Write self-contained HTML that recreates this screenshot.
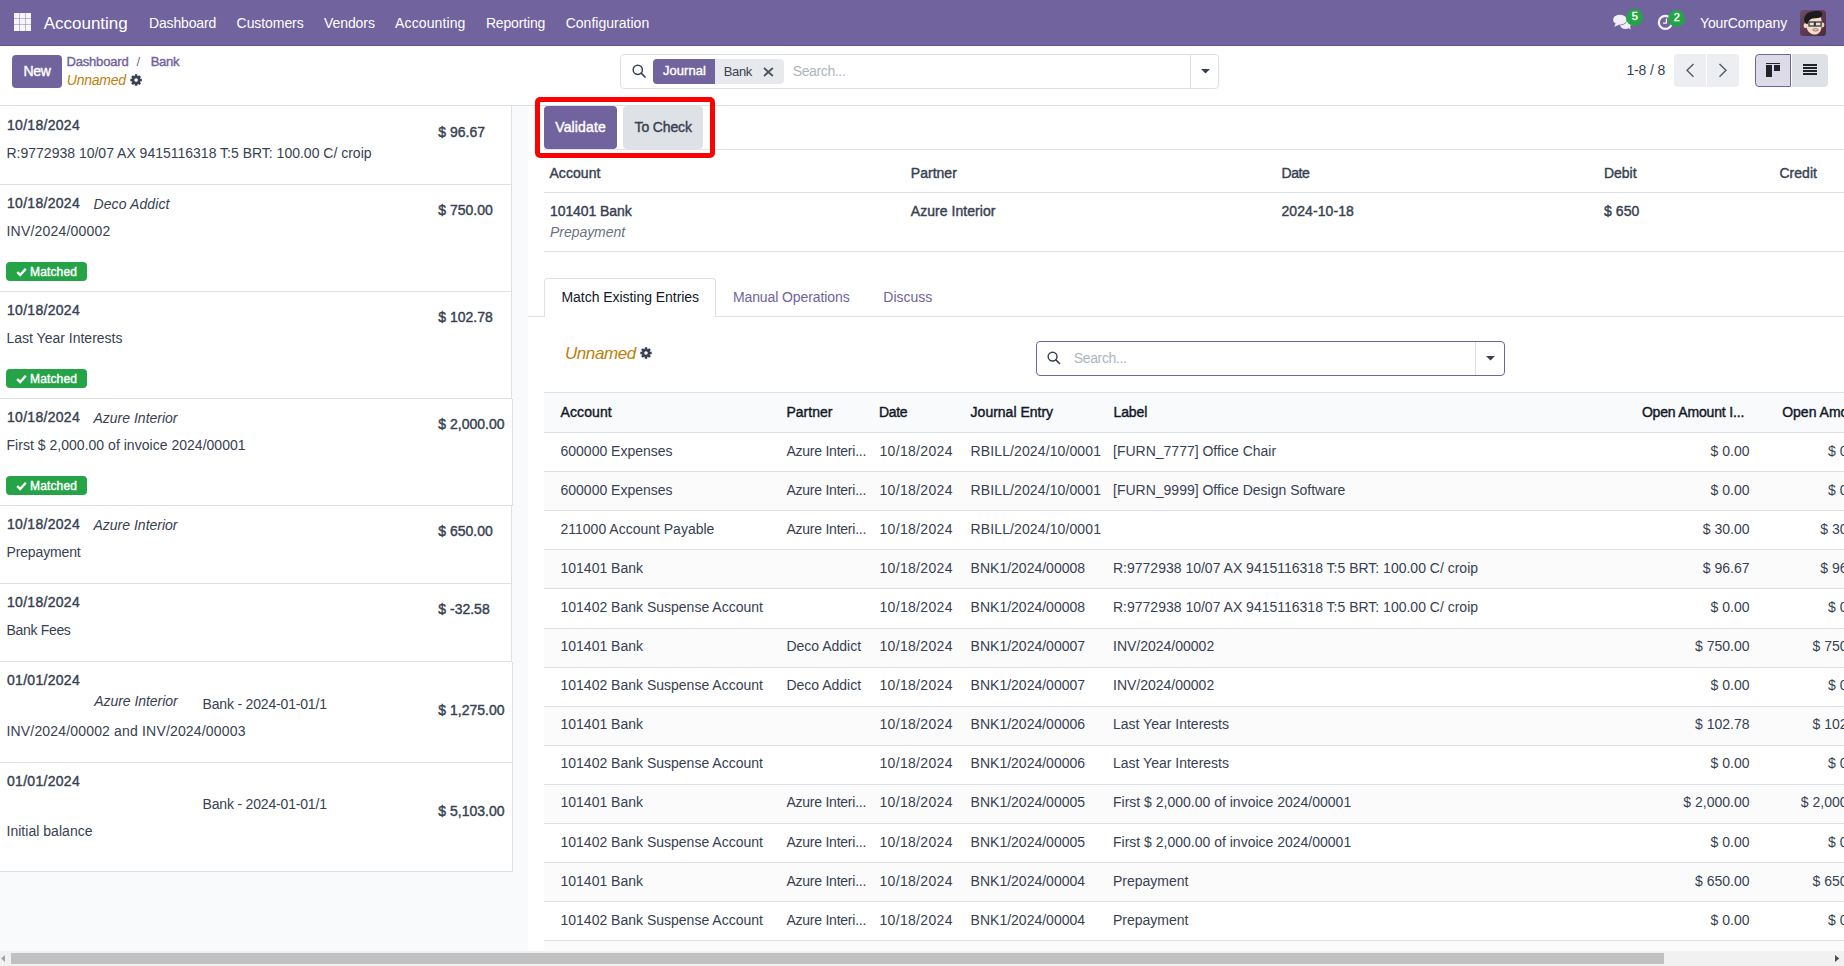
<!DOCTYPE html>
<html><head><meta charset="utf-8"><title>Bank Reconciliation</title>
<style>
html,body{margin:0;padding:0;}
body{width:1844px;height:966px;overflow:hidden;position:relative;background:#fff;font-family:"Liberation Sans",sans-serif;color:#374151;}
body>div,body>svg{position:absolute;}
.t{white-space:nowrap;line-height:1;}
</style></head><body>
<div style="left:0px;top:0px;width:1844px;height:45px;background:#71639e;"></div>
<div style="left:0px;top:45px;width:1844px;height:1px;background:#5f5389;"></div>
<div style="left:14px;top:13px;width:17px;height:18px;background:#f6f5fa;"></div>
<div style="left:19px;top:13px;width:1px;height:18px;background:rgba(113,99,158,0.42);"></div>
<div style="left:25px;top:13px;width:1px;height:18px;background:rgba(113,99,158,0.42);"></div>
<div style="left:14px;top:18px;width:17px;height:1px;background:rgba(113,99,158,0.42);"></div>
<div style="left:14px;top:24px;width:17px;height:1px;background:rgba(113,99,158,0.42);"></div>
<div class="t" style="top:15px;font-size:17px;color:#fff;letter-spacing:-0.011px;left:43.7px;">Accounting</div>
<div class="t" style="top:16px;font-size:14px;color:#fff;letter-spacing:-0.161px;left:149px;">Dashboard</div>
<div class="t" style="top:16px;font-size:14px;color:#fff;letter-spacing:-0.073px;left:236.6px;">Customers</div>
<div class="t" style="top:16px;font-size:14px;color:#fff;letter-spacing:-0.080px;left:324px;">Vendors</div>
<div class="t" style="top:16px;font-size:14px;color:#fff;letter-spacing:0.105px;left:395.1px;">Accounting</div>
<div class="t" style="top:16px;font-size:14px;color:#fff;letter-spacing:-0.152px;left:485.9px;">Reporting</div>
<div class="t" style="top:16px;font-size:14px;color:#fff;letter-spacing:0.020px;left:565.7px;">Configuration</div>
<svg style="position:absolute;left:1608px;top:6px" width="26" height="26" viewBox="0 0 26 26">
<ellipse cx="17.4" cy="18.6" rx="5.4" ry="4.4" fill="#efedf5"/>
<path d="M19.5 21.6 L22.8 23.4 L21.8 19.8z" fill="#efedf5"/>
<ellipse cx="11.9" cy="13.8" rx="7.3" ry="5.5" fill="#71639e"/>
<ellipse cx="11.9" cy="13.8" rx="6.8" ry="5.0" fill="#f1eff7"/>
<path d="M7.6 17.4 L6.3 20.7 L11.8 18.6z" fill="#f1eff7"/>
</svg>
<div style="left:1625.5px;top:8.8px;width:17.6px;height:17.6px;border-radius:50%;background:#24a447;"></div>
<div class="t" style="top:11px;font-size:11px;color:#fff;-webkit-text-stroke:0.4px #fff;left:1634.8px;transform:translateX(-50%);">5</div>
<svg style="position:absolute;left:1655px;top:12px" width="22" height="22" viewBox="0 0 22 22">
<circle cx="10.4" cy="10.4" r="6.55" fill="none" stroke="#f4f2f8" stroke-width="2.3"/>
<path d="M11.4 6.4 V11.2 H8" fill="none" stroke="#f4f2f8" stroke-width="1.3"/>
</svg>
<div style="left:1667.9px;top:9.7px;width:17.6px;height:17.6px;border-radius:50%;background:#24a447;"></div>
<div class="t" style="top:12px;font-size:11px;color:#fff;-webkit-text-stroke:0.4px #fff;left:1676.8px;transform:translateX(-50%);">2</div>
<div class="t" style="top:16px;font-size:14px;color:#fff;letter-spacing:-0.107px;left:1700px;">YourCompany</div>
<svg style="position:absolute;left:1800px;top:10px" width="26" height="26" viewBox="0 0 26 26">
<defs><linearGradient id="ag" x1="0" y1="0" x2="1" y2="1"><stop offset="0" stop-color="#6e4d66"/><stop offset="1" stop-color="#4a2a3f"/></linearGradient></defs>
<rect x="0" y="0" width="26" height="26" rx="3.5" fill="url(#ag)"/>
<ellipse cx="5.6" cy="15.6" rx="2" ry="2.6" fill="#f5d6bf"/>
<ellipse cx="22.6" cy="15" rx="1.8" ry="2.4" fill="#f0cdb3"/>
<path d="M6.5 10 C6.5 6 9 5 14 5 C19 5 21.5 6.5 21.5 11 L21.5 16 C21.5 21.5 18.5 24.6 14.8 24.6 C10.5 24.6 7 21.5 6.5 16z" fill="#f7dcc6"/>
<path d="M4.2 10.5 C3.8 5 8 1.2 14 1.2 C18 1 22 1 22.3 3.5 C22.6 6.5 20 8.2 16 8.2 C12.5 8.2 9.5 8.6 8.3 12.8 L7.2 14.2 C5.6 13.6 4.4 12.4 4.2 10.5z" fill="#1c1c1f"/>
<rect x="9" y="12" width="5.4" height="4" fill="#e8e2de" stroke="#3a3a3a" stroke-width="1.3"/>
<rect x="15.3" y="12" width="5.8" height="4" fill="#e8e2de" stroke="#3a3a3a" stroke-width="1.3"/>
<ellipse cx="15.6" cy="19.8" rx="2.8" ry="1.1" fill="#eee" stroke="#7a4a45" stroke-width="0.8"/>
</svg>
<div style="left:0px;top:105px;width:1844px;height:1px;background:#dde1e6;"></div>
<div style="left:12px;top:55px;width:50px;height:33px;background:#71639e;border-radius:4px;"></div>
<div class="t" style="top:63.599999999999994px;font-size:14px;color:#fff;-webkit-text-stroke:0.4px #fff;letter-spacing:-0.333px;left:23.6px;">New</div>
<div class="t" style="top:54.8px;font-size:13px;color:#71639e;-webkit-text-stroke:0.4px #71639e;letter-spacing:-0.181px;left:66.5px;">Dashboard</div>
<div class="t" style="top:54.8px;font-size:13px;color:#6b7280;left:136.5px;">/</div>
<div class="t" style="top:54.8px;font-size:13px;color:#71639e;-webkit-text-stroke:0.4px #71639e;letter-spacing:-0.285px;left:150.7px;">Bank</div>
<div class="t" style="top:72.8px;font-size:14px;color:#bd800b;font-style:italic;letter-spacing:-0.239px;left:66.8px;">Unnamed</div>
<svg style="position:absolute;left:129.5px;top:74px" width="12.2" height="12.2" viewBox="0 0 24 24"><path fill="#374151" fill-rule="evenodd" d="M9.27 4.06 L9.59 0.65 L14.41 0.65 L14.73 4.06 L15.68 4.45 L18.32 2.27 L21.73 5.68 L19.55 8.32 L19.94 9.27 L23.35 9.59 L23.35 14.41 L19.94 14.73 L19.55 15.68 L21.73 18.32 L18.32 21.73 L15.68 19.55 L14.73 19.94 L14.41 23.35 L9.59 23.35 L9.27 19.94 L8.32 19.55 L5.68 21.73 L2.27 18.32 L4.45 15.68 L4.06 14.73 L0.65 14.41 L0.65 9.59 L4.06 9.27 L4.45 8.32 L2.27 5.68 L5.68 2.27 L8.32 4.45Z M15.6 12 A3.6 3.6 0 1 0 8.4 12 A3.6 3.6 0 1 0 15.6 12Z"/></svg>
<div style="left:620px;top:54px;width:599px;height:35px;border:1px solid #dde1e6;border-radius:4px;box-sizing:border-box;background:#fff;"></div>
<div style="left:1190px;top:55px;width:1px;height:33px;background:#dde1e6;"></div>
<svg style="position:absolute;left:631.5px;top:64px" width="14" height="14" viewBox="0 0 14 14"><circle cx="5.8" cy="5.8" r="4.6" fill="none" stroke="#374151" stroke-width="1.5"/><path d="M9.2 9.2 L13 13" stroke="#374151" stroke-width="1.7" stroke-linecap="round"/></svg>
<div style="left:653px;top:59px;width:62px;height:25px;background:#71639e;border-radius:4px 0 0 4px;"></div>
<div class="t" style="top:64px;font-size:13px;color:#fff;-webkit-text-stroke:0.4px #fff;letter-spacing:0.049px;left:663px;">Journal</div>
<div style="left:715px;top:59px;width:69px;height:25px;background:#e7e9ed;border-radius:0 4px 4px 0;"></div>
<div class="t" style="top:64.6px;font-size:13px;color:#374151;letter-spacing:-0.410px;left:723.8px;">Bank</div>
<svg style="position:absolute;left:762.8px;top:66.8px" width="10.8" height="10" viewBox="0 0 10.8 10"><path d="M1 1 L9.8 9 M9.8 1 L1 9" stroke="#4b5563" stroke-width="1.8"/></svg>
<div class="t" style="top:63.7px;font-size:14px;color:#adb5bd;letter-spacing:-0.368px;left:792.7px;">Search...</div>
<svg style="position:absolute;left:1200.5px;top:69px" width="9" height="5" viewBox="0 0 9 5"><path d="M0 0 H9 L4.5 4.6z" fill="#374151"/></svg>
<div class="t" style="top:62.599999999999994px;font-size:14px;color:#374151;letter-spacing:-0.167px;left:1626.5px;">1-8 / 8</div>
<div style="left:1674px;top:54px;width:32px;height:33px;background:#eceef1;border-radius:4px 0 0 4px;"></div>
<div style="left:1707px;top:54px;width:32px;height:33px;background:#eceef1;border-radius:0 4px 4px 0;"></div>
<svg style="position:absolute;left:1684px;top:62px" width="12" height="17" viewBox="0 0 12 17"><path d="M9.5 2 L3 8.3 L9.5 14.8" fill="none" stroke="#555b63" stroke-width="1.4"/></svg>
<svg style="position:absolute;left:1717px;top:62px" width="12" height="17" viewBox="0 0 12 17"><path d="M2.5 2 L9 8.3 L2.5 14.8" fill="none" stroke="#555b63" stroke-width="1.4"/></svg>
<div style="left:1755px;top:54px;width:36px;height:33px;background:#dedbe9;border:1px solid #71639e;border-radius:4px 0 0 4px;box-sizing:border-box;"></div>
<div style="left:1792px;top:54px;width:36px;height:33px;background:#dee2e6;border-radius:0 4px 4px 0;"></div>
<div style="left:1766px;top:63px;width:14px;height:1px;background:#212529;"></div>
<div style="left:1766px;top:65px;width:6px;height:12px;background:#212529;"></div>
<div style="left:1774px;top:65px;width:6px;height:6px;background:#212529;"></div>
<div style="left:1803px;top:64px;width:14.4px;height:2px;background:#212529;"></div>
<div style="left:1803px;top:67px;width:14.4px;height:2px;background:#212529;"></div>
<div style="left:1803px;top:70px;width:14.4px;height:2px;background:#212529;"></div>
<div style="left:1803px;top:73px;width:14.4px;height:2px;background:#212529;"></div>
<div style="left:0px;top:106px;width:528px;height:845px;background:#f9fafb;"></div>
<div style="left:0px;top:106px;width:511px;height:78px;background:#fff;"></div>
<div style="left:511px;top:106px;width:1px;height:79px;background:#dde1e6;"></div>
<div style="left:0px;top:184px;width:512px;height:1px;background:#dde1e6;"></div>
<div style="left:0px;top:185px;width:511px;height:106px;background:#fff;"></div>
<div style="left:511px;top:185px;width:1px;height:107px;background:#dde1e6;"></div>
<div style="left:0px;top:291px;width:512px;height:1px;background:#dde1e6;"></div>
<div style="left:0px;top:292px;width:511px;height:106px;background:#fff;"></div>
<div style="left:511px;top:292px;width:1px;height:107px;background:#dde1e6;"></div>
<div style="left:0px;top:398px;width:512px;height:1px;background:#dde1e6;"></div>
<div style="left:0px;top:399px;width:512px;height:106px;background:#fff;"></div>
<div style="left:512px;top:399px;width:1px;height:107px;background:#dde1e6;"></div>
<div style="left:0px;top:505px;width:513px;height:1px;background:#dde1e6;"></div>
<div style="left:0px;top:506px;width:511px;height:77px;background:#fff;"></div>
<div style="left:511px;top:506px;width:1px;height:78px;background:#dde1e6;"></div>
<div style="left:0px;top:583px;width:512px;height:1px;background:#dde1e6;"></div>
<div style="left:0px;top:584px;width:511px;height:77px;background:#fff;"></div>
<div style="left:511px;top:584px;width:1px;height:78px;background:#dde1e6;"></div>
<div style="left:0px;top:661px;width:512px;height:1px;background:#dde1e6;"></div>
<div style="left:0px;top:662px;width:512px;height:100px;background:#fff;"></div>
<div style="left:512px;top:662px;width:1px;height:101px;background:#dde1e6;"></div>
<div style="left:0px;top:762px;width:513px;height:1px;background:#dde1e6;"></div>
<div style="left:0px;top:763px;width:512px;height:108px;background:#fff;"></div>
<div style="left:512px;top:763px;width:1px;height:109px;background:#dde1e6;"></div>
<div style="left:0px;top:871px;width:513px;height:1px;background:#dde1e6;"></div>
<div class="t" style="top:118px;font-size:14px;color:#374151;-webkit-text-stroke:0.4px #374151;letter-spacing:0.297px;left:7px;">10/18/2024</div>
<div class="t" style="top:146px;font-size:14px;color:#374151;left:6.5px;">R:9772938 10/07 AX 9415116318 T:5 BRT: 100.00 C/ croip</div>
<div class="t" style="top:125px;font-size:14px;color:#374151;-webkit-text-stroke:0.4px #374151;left:438.3px;">$ 96.67</div>
<div class="t" style="top:196px;font-size:14px;color:#374151;-webkit-text-stroke:0.4px #374151;letter-spacing:0.297px;left:7px;">10/18/2024</div>
<div class="t" style="top:197px;font-size:14px;color:#374151;font-style:italic;letter-spacing:0.095px;left:93.5px;">Deco Addict</div>
<div class="t" style="top:224px;font-size:14px;color:#374151;letter-spacing:0.203px;left:6.5px;">INV/2024/00002</div>
<div class="t" style="top:203px;font-size:14px;color:#374151;-webkit-text-stroke:0.4px #374151;left:438.3px;">$ 750.00</div>
<div style="left:6px;top:262px;width:81px;height:18.6px;background:#24a447;border-radius:4px;"></div>
<svg style="position:absolute;left:16px;top:266.5px" width="11" height="10" viewBox="0 0 11 10"><path d="M1.2 5.2 L4.2 8 L9.8 1.8" fill="none" stroke="#fff" stroke-width="2.4"/></svg>
<div class="t" style="top:266px;font-size:12px;color:#fff;-webkit-text-stroke:0.4px #fff;letter-spacing:0.141px;left:30px;">Matched</div>
<div class="t" style="top:303px;font-size:14px;color:#374151;-webkit-text-stroke:0.4px #374151;letter-spacing:0.297px;left:7px;">10/18/2024</div>
<div class="t" style="top:331px;font-size:14px;color:#374151;left:6.5px;">Last Year Interests</div>
<div class="t" style="top:310px;font-size:14px;color:#374151;-webkit-text-stroke:0.4px #374151;left:438.3px;">$ 102.78</div>
<div style="left:6px;top:369px;width:81px;height:18.6px;background:#24a447;border-radius:4px;"></div>
<svg style="position:absolute;left:16px;top:373.5px" width="11" height="10" viewBox="0 0 11 10"><path d="M1.2 5.2 L4.2 8 L9.8 1.8" fill="none" stroke="#fff" stroke-width="2.4"/></svg>
<div class="t" style="top:373px;font-size:12px;color:#fff;-webkit-text-stroke:0.4px #fff;letter-spacing:0.141px;left:30px;">Matched</div>
<div class="t" style="top:410px;font-size:14px;color:#374151;-webkit-text-stroke:0.4px #374151;letter-spacing:0.297px;left:7px;">10/18/2024</div>
<div class="t" style="top:411px;font-size:14px;color:#374151;font-style:italic;left:93.5px;">Azure Interior</div>
<div class="t" style="top:438px;font-size:14px;color:#374151;letter-spacing:0.025px;left:6.5px;">First $ 2,000.00 of invoice 2024/00001</div>
<div class="t" style="top:417px;font-size:14px;color:#374151;-webkit-text-stroke:0.4px #374151;left:438.3px;">$ 2,000.00</div>
<div style="left:6px;top:476px;width:81px;height:18.6px;background:#24a447;border-radius:4px;"></div>
<svg style="position:absolute;left:16px;top:480.5px" width="11" height="10" viewBox="0 0 11 10"><path d="M1.2 5.2 L4.2 8 L9.8 1.8" fill="none" stroke="#fff" stroke-width="2.4"/></svg>
<div class="t" style="top:480px;font-size:12px;color:#fff;-webkit-text-stroke:0.4px #fff;letter-spacing:0.141px;left:30px;">Matched</div>
<div class="t" style="top:517px;font-size:14px;color:#374151;-webkit-text-stroke:0.4px #374151;letter-spacing:0.297px;left:7px;">10/18/2024</div>
<div class="t" style="top:518px;font-size:14px;color:#374151;font-style:italic;left:93.5px;">Azure Interior</div>
<div class="t" style="top:545px;font-size:14px;color:#374151;letter-spacing:-0.145px;left:6.5px;">Prepayment</div>
<div class="t" style="top:524px;font-size:14px;color:#374151;-webkit-text-stroke:0.4px #374151;left:438.3px;">$ 650.00</div>
<div class="t" style="top:595px;font-size:14px;color:#374151;-webkit-text-stroke:0.4px #374151;letter-spacing:0.297px;left:7px;">10/18/2024</div>
<div class="t" style="top:623px;font-size:14px;color:#374151;letter-spacing:-0.323px;left:6.5px;">Bank Fees</div>
<div class="t" style="top:602px;font-size:14px;color:#374151;-webkit-text-stroke:0.4px #374151;left:438.3px;">$ -32.58</div>
<div class="t" style="top:673px;font-size:14px;color:#374151;-webkit-text-stroke:0.4px #374151;letter-spacing:0.297px;left:7px;">01/01/2024</div>
<div class="t" style="top:693.5px;font-size:14px;color:#374151;font-style:italic;letter-spacing:-0.043px;left:94.2px;">Azure Interior</div>
<div class="t" style="top:696.7px;font-size:14px;color:#374151;letter-spacing:-0.178px;left:202.5px;">Bank - 2024-01-01/1</div>
<div class="t" style="top:723.6px;font-size:14px;color:#374151;letter-spacing:0.169px;left:6.5px;">INV/2024/00002 and INV/2024/00003</div>
<div class="t" style="top:703px;font-size:14px;color:#374151;-webkit-text-stroke:0.4px #374151;left:438.3px;">$ 1,275.00</div>
<div class="t" style="top:773.5px;font-size:14px;color:#374151;-webkit-text-stroke:0.4px #374151;letter-spacing:0.297px;left:7px;">01/01/2024</div>
<div class="t" style="top:797px;font-size:14px;color:#374151;letter-spacing:-0.178px;left:202.5px;">Bank - 2024-01-01/1</div>
<div class="t" style="top:824.4px;font-size:14px;color:#374151;letter-spacing:0.028px;left:6.5px;">Initial balance</div>
<div class="t" style="top:804px;font-size:14px;color:#374151;-webkit-text-stroke:0.4px #374151;left:438.3px;">$ 5,103.00</div>
<div style="left:528px;top:106px;width:1316px;height:845px;background:#fff;"></div>
<div style="left:544px;top:149px;width:1300px;height:1px;background:#dde1e6;"></div>
<div style="left:544px;top:106px;width:73px;height:43px;background:#71639e;border-radius:4px;"></div>
<div class="t" style="top:119.69999999999999px;font-size:14px;color:#fff;-webkit-text-stroke:0.4px #fff;letter-spacing:0.157px;left:555.2px;">Validate</div>
<div style="left:623px;top:106px;width:80px;height:43px;background:#dee2e6;border-radius:4px;"></div>
<div class="t" style="top:119.69999999999999px;font-size:14px;color:#374151;-webkit-text-stroke:0.4px #374151;letter-spacing:-0.143px;left:634.6px;">To Check</div>
<div style="left:535px;top:97px;width:180px;height:61px;border:5px solid #ff0000;border-radius:5px;box-sizing:border-box;"></div>
<div class="t" style="top:166px;font-size:14px;color:#374151;-webkit-text-stroke:0.4px #374151;letter-spacing:0.089px;left:549.4px;">Account</div>
<div class="t" style="top:166px;font-size:14px;color:#374151;-webkit-text-stroke:0.4px #374151;letter-spacing:0.016px;left:910.8px;">Partner</div>
<div class="t" style="top:166px;font-size:14px;color:#374151;-webkit-text-stroke:0.4px #374151;letter-spacing:-0.391px;left:1281.5px;">Date</div>
<div class="t" style="top:166px;font-size:14px;color:#374151;-webkit-text-stroke:0.4px #374151;letter-spacing:-0.034px;left:1604px;">Debit</div>
<div class="t" style="top:166px;font-size:14px;color:#374151;-webkit-text-stroke:0.4px #374151;letter-spacing:0.045px;left:1779.4px;">Credit</div>
<div style="left:544px;top:192px;width:1300px;height:1px;background:#dde1e6;"></div>
<div class="t" style="top:204px;font-size:14px;color:#374151;-webkit-text-stroke:0.4px #374151;letter-spacing:-0.089px;left:550px;">101401 Bank</div>
<div class="t" style="top:224.6px;font-size:14px;color:#6b7280;font-style:italic;letter-spacing:-0.045px;left:550px;">Prepayment</div>
<div class="t" style="top:204px;font-size:14px;color:#374151;-webkit-text-stroke:0.4px #374151;letter-spacing:0.043px;left:910.8px;">Azure Interior</div>
<div class="t" style="top:204px;font-size:14px;color:#374151;-webkit-text-stroke:0.4px #374151;letter-spacing:0.074px;left:1281.5px;">2024-10-18</div>
<div class="t" style="top:204px;font-size:14px;color:#374151;-webkit-text-stroke:0.4px #374151;letter-spacing:0.077px;left:1604px;">$ 650</div>
<div style="left:544px;top:251px;width:1300px;height:1px;background:#dde1e6;"></div>
<div style="left:528px;top:316px;width:1316px;height:1px;background:#dde1e6;"></div>
<div style="left:544px;top:278px;width:172px;height:39px;border:1px solid #dde1e6;border-bottom:none;border-radius:4px 4px 0 0;background:#fff;box-sizing:border-box;"></div>
<div class="t" style="top:290.3px;font-size:14px;color:#111827;letter-spacing:-0.044px;left:561.5px;">Match Existing Entries</div>
<div class="t" style="top:290.3px;font-size:14px;color:#71639e;letter-spacing:-0.096px;left:732.9px;">Manual Operations</div>
<div class="t" style="top:290.3px;font-size:14px;color:#71639e;left:883.3px;">Discuss</div>
<div class="t" style="top:345px;font-size:17px;color:#bd800b;font-style:italic;letter-spacing:-0.429px;left:565px;">Unnamed</div>
<svg style="position:absolute;left:639.7px;top:346.8px" width="12" height="12" viewBox="0 0 24 24"><path fill="#374151" fill-rule="evenodd" d="M9.27 4.06 L9.59 0.65 L14.41 0.65 L14.73 4.06 L15.68 4.45 L18.32 2.27 L21.73 5.68 L19.55 8.32 L19.94 9.27 L23.35 9.59 L23.35 14.41 L19.94 14.73 L19.55 15.68 L21.73 18.32 L18.32 21.73 L15.68 19.55 L14.73 19.94 L14.41 23.35 L9.59 23.35 L9.27 19.94 L8.32 19.55 L5.68 21.73 L2.27 18.32 L4.45 15.68 L4.06 14.73 L0.65 14.41 L0.65 9.59 L4.06 9.27 L4.45 8.32 L2.27 5.68 L5.68 2.27 L8.32 4.45Z M15.6 12 A3.6 3.6 0 1 0 8.4 12 A3.6 3.6 0 1 0 15.6 12Z"/></svg>
<div style="left:1036px;top:341px;width:469px;height:35px;border:1px solid #71639e;border-radius:4px;box-sizing:border-box;background:#fff;"></div>
<div style="left:1475px;top:342px;width:1px;height:33px;background:#dde1e6;"></div>
<svg style="position:absolute;left:1047px;top:351px" width="13.5" height="13.5" viewBox="0 0 14 14"><circle cx="5.8" cy="5.8" r="4.6" fill="none" stroke="#374151" stroke-width="1.5"/><path d="M9.2 9.2 L13 13" stroke="#374151" stroke-width="1.7" stroke-linecap="round"/></svg>
<div class="t" style="top:350.6px;font-size:14px;color:#adb5bd;letter-spacing:-0.368px;left:1073.8px;">Search...</div>
<svg style="position:absolute;left:1485.8px;top:356px" width="9" height="5" viewBox="0 0 9 5"><path d="M0 0 H9 L4.5 4.6z" fill="#374151"/></svg>
<div style="left:544px;top:392px;width:1300px;height:40px;background:#f9fafb;"></div>
<div style="left:544px;top:392px;width:1300px;height:1px;background:#dde1e6;"></div>
<div style="left:544px;top:432px;width:1300px;height:1px;background:#dde1e6;"></div>
<div class="t" style="top:404.6px;font-size:14px;color:#111827;-webkit-text-stroke:0.4px #111827;letter-spacing:0.103px;left:560.5px;">Account</div>
<div class="t" style="top:404.6px;font-size:14px;color:#111827;-webkit-text-stroke:0.4px #111827;letter-spacing:0.030px;left:786.4px;">Partner</div>
<div class="t" style="top:404.6px;font-size:14px;color:#111827;-webkit-text-stroke:0.4px #111827;letter-spacing:-0.391px;left:879.1px;">Date</div>
<div class="t" style="top:404.6px;font-size:14px;color:#111827;-webkit-text-stroke:0.4px #111827;left:970.6px;">Journal Entry</div>
<div class="t" style="top:404.6px;font-size:14px;color:#111827;-webkit-text-stroke:0.4px #111827;letter-spacing:-0.047px;left:1113.4px;">Label</div>
<div class="t" style="top:404.6px;font-size:14px;color:#111827;-webkit-text-stroke:0.4px #111827;letter-spacing:-0.178px;left:1641.9px;">Open Amount I...</div>
<div class="t" style="top:404.6px;font-size:14px;color:#111827;-webkit-text-stroke:0.4px #111827;left:1782.2px;">Open Amount in Currency</div>
<div style="left:544px;top:471px;width:1300px;height:1px;background:#dde1e6;"></div>
<div style="left:544px;top:472px;width:1300px;height:38px;background:#fbfbfc;"></div>
<div style="left:544px;top:510px;width:1300px;height:1px;background:#dde1e6;"></div>
<div style="left:544px;top:549px;width:1300px;height:1px;background:#dde1e6;"></div>
<div style="left:544px;top:550px;width:1300px;height:38px;background:#fbfbfc;"></div>
<div style="left:544px;top:588px;width:1300px;height:1px;background:#dde1e6;"></div>
<div style="left:544px;top:628px;width:1300px;height:1px;background:#dde1e6;"></div>
<div style="left:544px;top:629px;width:1300px;height:38px;background:#fbfbfc;"></div>
<div style="left:544px;top:667px;width:1300px;height:1px;background:#dde1e6;"></div>
<div style="left:544px;top:706px;width:1300px;height:1px;background:#dde1e6;"></div>
<div style="left:544px;top:707px;width:1300px;height:38px;background:#fbfbfc;"></div>
<div style="left:544px;top:745px;width:1300px;height:1px;background:#dde1e6;"></div>
<div style="left:544px;top:784px;width:1300px;height:1px;background:#dde1e6;"></div>
<div style="left:544px;top:785px;width:1300px;height:38px;background:#fbfbfc;"></div>
<div style="left:544px;top:823px;width:1300px;height:1px;background:#dde1e6;"></div>
<div style="left:544px;top:862px;width:1300px;height:1px;background:#dde1e6;"></div>
<div style="left:544px;top:863px;width:1300px;height:38px;background:#fbfbfc;"></div>
<div style="left:544px;top:901px;width:1300px;height:1px;background:#dde1e6;"></div>
<div style="left:544px;top:940px;width:1300px;height:1px;background:#dde1e6;"></div>
<div style="left:544px;top:941px;width:1300px;height:10px;background:#fbfbfc;"></div>
<div class="t" style="top:443.5px;font-size:14px;color:#374151;left:560.5px;">600000 Expenses</div>
<div class="t" style="top:443.5px;font-size:14px;color:#374151;letter-spacing:-0.236px;left:786.4px;">Azure Interi...</div>
<div class="t" style="top:443.5px;font-size:14px;color:#374151;letter-spacing:0.317px;left:879.5px;">10/18/2024</div>
<div class="t" style="top:443.5px;font-size:14px;color:#374151;letter-spacing:0.112px;left:970.6px;">RBILL/2024/10/0001</div>
<div class="t" style="top:443.5px;font-size:14px;color:#374151;left:1113px;">[FURN_7777] Office Chair</div>
<div class="t" style="top:443.5px;font-size:14px;color:#374151;right:94.5px;">$ 0.00</div>
<div class="t" style="top:443.5px;font-size:14px;color:#374151;right:-23px;">$ 0.00</div>
<div class="t" style="top:482.6px;font-size:14px;color:#374151;left:560.5px;">600000 Expenses</div>
<div class="t" style="top:482.6px;font-size:14px;color:#374151;letter-spacing:-0.236px;left:786.4px;">Azure Interi...</div>
<div class="t" style="top:482.6px;font-size:14px;color:#374151;letter-spacing:0.317px;left:879.5px;">10/18/2024</div>
<div class="t" style="top:482.6px;font-size:14px;color:#374151;letter-spacing:0.112px;left:970.6px;">RBILL/2024/10/0001</div>
<div class="t" style="top:482.6px;font-size:14px;color:#374151;left:1113px;">[FURN_9999] Office Design Software</div>
<div class="t" style="top:482.6px;font-size:14px;color:#374151;right:94.5px;">$ 0.00</div>
<div class="t" style="top:482.6px;font-size:14px;color:#374151;right:-23px;">$ 0.00</div>
<div class="t" style="top:521.7px;font-size:14px;color:#374151;left:560.5px;">211000 Account Payable</div>
<div class="t" style="top:521.7px;font-size:14px;color:#374151;letter-spacing:-0.236px;left:786.4px;">Azure Interi...</div>
<div class="t" style="top:521.7px;font-size:14px;color:#374151;letter-spacing:0.317px;left:879.5px;">10/18/2024</div>
<div class="t" style="top:521.7px;font-size:14px;color:#374151;letter-spacing:0.112px;left:970.6px;">RBILL/2024/10/0001</div>
<div class="t" style="top:521.7px;font-size:14px;color:#374151;right:94.5px;">$ 30.00</div>
<div class="t" style="top:521.7px;font-size:14px;color:#374151;right:-23px;">$ 30.00</div>
<div class="t" style="top:560.8px;font-size:14px;color:#374151;left:560.5px;">101401 Bank</div>
<div class="t" style="top:560.8px;font-size:14px;color:#374151;letter-spacing:0.317px;left:879.5px;">10/18/2024</div>
<div class="t" style="top:560.8px;font-size:14px;color:#374151;left:970.6px;">BNK1/2024/00008</div>
<div class="t" style="top:560.8px;font-size:14px;color:#374151;left:1113px;">R:9772938 10/07 AX 9415116318 T:5 BRT: 100.00 C/ croip</div>
<div class="t" style="top:560.8px;font-size:14px;color:#374151;right:94.5px;">$ 96.67</div>
<div class="t" style="top:560.8px;font-size:14px;color:#374151;right:-23px;">$ 96.67</div>
<div class="t" style="top:599.9px;font-size:14px;color:#374151;left:560.5px;">101402 Bank Suspense Account</div>
<div class="t" style="top:599.9px;font-size:14px;color:#374151;letter-spacing:0.317px;left:879.5px;">10/18/2024</div>
<div class="t" style="top:599.9px;font-size:14px;color:#374151;left:970.6px;">BNK1/2024/00008</div>
<div class="t" style="top:599.9px;font-size:14px;color:#374151;left:1113px;">R:9772938 10/07 AX 9415116318 T:5 BRT: 100.00 C/ croip</div>
<div class="t" style="top:599.9px;font-size:14px;color:#374151;right:94.5px;">$ 0.00</div>
<div class="t" style="top:599.9px;font-size:14px;color:#374151;right:-23px;">$ 0.00</div>
<div class="t" style="top:639.0px;font-size:14px;color:#374151;left:560.5px;">101401 Bank</div>
<div class="t" style="top:639.0px;font-size:14px;color:#374151;left:786.4px;">Deco Addict</div>
<div class="t" style="top:639.0px;font-size:14px;color:#374151;letter-spacing:0.317px;left:879.5px;">10/18/2024</div>
<div class="t" style="top:639.0px;font-size:14px;color:#374151;left:970.6px;">BNK1/2024/00007</div>
<div class="t" style="top:639.0px;font-size:14px;color:#374151;left:1113px;">INV/2024/00002</div>
<div class="t" style="top:639.0px;font-size:14px;color:#374151;right:94.5px;">$ 750.00</div>
<div class="t" style="top:639.0px;font-size:14px;color:#374151;right:-23px;">$ 750.00</div>
<div class="t" style="top:678.1px;font-size:14px;color:#374151;left:560.5px;">101402 Bank Suspense Account</div>
<div class="t" style="top:678.1px;font-size:14px;color:#374151;left:786.4px;">Deco Addict</div>
<div class="t" style="top:678.1px;font-size:14px;color:#374151;letter-spacing:0.317px;left:879.5px;">10/18/2024</div>
<div class="t" style="top:678.1px;font-size:14px;color:#374151;left:970.6px;">BNK1/2024/00007</div>
<div class="t" style="top:678.1px;font-size:14px;color:#374151;left:1113px;">INV/2024/00002</div>
<div class="t" style="top:678.1px;font-size:14px;color:#374151;right:94.5px;">$ 0.00</div>
<div class="t" style="top:678.1px;font-size:14px;color:#374151;right:-23px;">$ 0.00</div>
<div class="t" style="top:717.2px;font-size:14px;color:#374151;left:560.5px;">101401 Bank</div>
<div class="t" style="top:717.2px;font-size:14px;color:#374151;letter-spacing:0.317px;left:879.5px;">10/18/2024</div>
<div class="t" style="top:717.2px;font-size:14px;color:#374151;left:970.6px;">BNK1/2024/00006</div>
<div class="t" style="top:717.2px;font-size:14px;color:#374151;left:1113px;">Last Year Interests</div>
<div class="t" style="top:717.2px;font-size:14px;color:#374151;right:94.5px;">$ 102.78</div>
<div class="t" style="top:717.2px;font-size:14px;color:#374151;right:-23px;">$ 102.78</div>
<div class="t" style="top:756.3px;font-size:14px;color:#374151;left:560.5px;">101402 Bank Suspense Account</div>
<div class="t" style="top:756.3px;font-size:14px;color:#374151;letter-spacing:0.317px;left:879.5px;">10/18/2024</div>
<div class="t" style="top:756.3px;font-size:14px;color:#374151;left:970.6px;">BNK1/2024/00006</div>
<div class="t" style="top:756.3px;font-size:14px;color:#374151;left:1113px;">Last Year Interests</div>
<div class="t" style="top:756.3px;font-size:14px;color:#374151;right:94.5px;">$ 0.00</div>
<div class="t" style="top:756.3px;font-size:14px;color:#374151;right:-23px;">$ 0.00</div>
<div class="t" style="top:795.4px;font-size:14px;color:#374151;left:560.5px;">101401 Bank</div>
<div class="t" style="top:795.4px;font-size:14px;color:#374151;letter-spacing:-0.236px;left:786.4px;">Azure Interi...</div>
<div class="t" style="top:795.4px;font-size:14px;color:#374151;letter-spacing:0.317px;left:879.5px;">10/18/2024</div>
<div class="t" style="top:795.4px;font-size:14px;color:#374151;left:970.6px;">BNK1/2024/00005</div>
<div class="t" style="top:795.4px;font-size:14px;color:#374151;left:1113px;">First $ 2,000.00 of invoice 2024/00001</div>
<div class="t" style="top:795.4px;font-size:14px;color:#374151;right:94.5px;">$ 2,000.00</div>
<div class="t" style="top:795.4px;font-size:14px;color:#374151;right:-23px;">$ 2,000.00</div>
<div class="t" style="top:834.5px;font-size:14px;color:#374151;left:560.5px;">101402 Bank Suspense Account</div>
<div class="t" style="top:834.5px;font-size:14px;color:#374151;letter-spacing:-0.236px;left:786.4px;">Azure Interi...</div>
<div class="t" style="top:834.5px;font-size:14px;color:#374151;letter-spacing:0.317px;left:879.5px;">10/18/2024</div>
<div class="t" style="top:834.5px;font-size:14px;color:#374151;left:970.6px;">BNK1/2024/00005</div>
<div class="t" style="top:834.5px;font-size:14px;color:#374151;left:1113px;">First $ 2,000.00 of invoice 2024/00001</div>
<div class="t" style="top:834.5px;font-size:14px;color:#374151;right:94.5px;">$ 0.00</div>
<div class="t" style="top:834.5px;font-size:14px;color:#374151;right:-23px;">$ 0.00</div>
<div class="t" style="top:873.6px;font-size:14px;color:#374151;left:560.5px;">101401 Bank</div>
<div class="t" style="top:873.6px;font-size:14px;color:#374151;letter-spacing:-0.236px;left:786.4px;">Azure Interi...</div>
<div class="t" style="top:873.6px;font-size:14px;color:#374151;letter-spacing:0.317px;left:879.5px;">10/18/2024</div>
<div class="t" style="top:873.6px;font-size:14px;color:#374151;left:970.6px;">BNK1/2024/00004</div>
<div class="t" style="top:873.6px;font-size:14px;color:#374151;left:1113px;">Prepayment</div>
<div class="t" style="top:873.6px;font-size:14px;color:#374151;right:94.5px;">$ 650.00</div>
<div class="t" style="top:873.6px;font-size:14px;color:#374151;right:-23px;">$ 650.00</div>
<div class="t" style="top:912.7px;font-size:14px;color:#374151;left:560.5px;">101402 Bank Suspense Account</div>
<div class="t" style="top:912.7px;font-size:14px;color:#374151;letter-spacing:-0.236px;left:786.4px;">Azure Interi...</div>
<div class="t" style="top:912.7px;font-size:14px;color:#374151;letter-spacing:0.317px;left:879.5px;">10/18/2024</div>
<div class="t" style="top:912.7px;font-size:14px;color:#374151;left:970.6px;">BNK1/2024/00004</div>
<div class="t" style="top:912.7px;font-size:14px;color:#374151;left:1113px;">Prepayment</div>
<div class="t" style="top:912.7px;font-size:14px;color:#374151;right:94.5px;">$ 0.00</div>
<div class="t" style="top:912.7px;font-size:14px;color:#374151;right:-23px;">$ 0.00</div>
<div style="left:0px;top:951px;width:1844px;height:15px;background:#f1f1f1;"></div>
<div style="left:11px;top:953px;width:1653px;height:11px;background:#c1c1c1;"></div>
<svg style="position:absolute;left:0px;top:954px" width="7" height="9" viewBox="0 0 7 9"><path d="M1 4.5 L5 1 V8z" fill="#a3a3a3"/></svg>
<svg style="position:absolute;left:1834px;top:954px" width="7" height="9" viewBox="0 0 7 9"><path d="M5.3 4.5 L1 1 V8z" fill="#505050"/></svg>
</body></html>
